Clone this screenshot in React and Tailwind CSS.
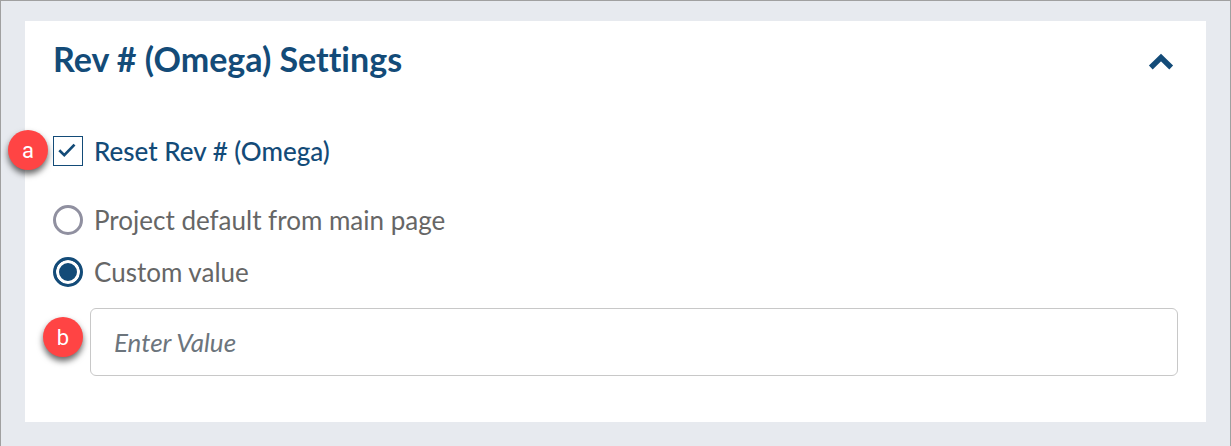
import React, { useState } from "react";

function Marker({ letter, className }) {
  return (
    <span
      className={`absolute flex h-10 w-10 items-center justify-center rounded-full bg-[#ff4444] pt-0.5 font-['Roboto',sans-serif] text-[22px] leading-6 text-white shadow-[0_4px_6px_rgba(0,0,0,0.6)] ${className}`}
    >
      {letter}
    </span>
  );
}

function RadioOption({ id, label, checked, onChange }) {
  return (
    <div className="flex h-8 items-center gap-[11px]">
      <input
        type="radio"
        name="revMode"
        id={id}
        checked={checked}
        onChange={onChange}
        className="h-[30px] w-[30px] shrink-0 appearance-none rounded-full border-3 border-[#9090a0] bg-white checked:border-[#134b78] checked:bg-[#134b78] checked:shadow-[inset_0_0_0_3px_white]"
      />
      <label htmlFor={id} className="text-[26px] leading-8 text-[#666666]">{label}</label>
    </div>
  );
}

function App() {
  const [open, setOpen] = useState(true);
  const [reset, setReset] = useState(true);
  const [mode, setMode] = useState("custom");
  const [value, setValue] = useState("");

  return (
    <div className="min-h-screen border border-[#a0a0a0] bg-[#e7eaef] px-6 pt-5 pb-6 font-['Lato',sans-serif] [font-variant-ligatures:none]">
      <section className="bg-white px-7 pt-[18px] pb-[46px]">
        <div className="flex h-11 items-center justify-between">
          <h2 className="pb-1 text-[34px] leading-10 font-bold text-[#134b78]">Rev # (Omega) Settings</h2>
          <button type="button" aria-label="Toggle settings" className="mr-1 p-0" onClick={() => setOpen(!open)}>
            <svg width="26" height="18" viewBox="0 0 26 18" fill="none" className={open ? "" : "rotate-180"}>
              <path d="M2.8 15.5L13 5.5L23.2 15.5" stroke="#134b78" strokeWidth="5.4" />
            </svg>
          </button>
        </div>

        {open && (
          <>
            <div className="relative mt-[52px] flex h-8 items-center gap-[11px]">
              <Marker letter="a" className="-left-[45px] -top-[5px]" />
              <div className="relative h-[30px] w-[30px] shrink-0">
                <input
                  type="checkbox"
                  id="resetRev"
                  checked={reset}
                  onChange={(e) => setReset(e.target.checked)}
                  className="block h-[30px] w-[30px] appearance-none border border-[#134b78] bg-white"
                />
                {reset && (
                  <svg className="pointer-events-none absolute inset-0" width="30" height="30" viewBox="0 0 30 30" fill="none">
                    <path d="M6.3 14.3L11.3 19.2L21.5 8.6" stroke="#134b78" strokeWidth="2.7" />
                  </svg>
                )}
              </div>
              <label htmlFor="resetRev" className="text-[26px] leading-8 font-medium text-[#134b78]">Reset Rev # (Omega)</label>
            </div>

            <div className="mt-[37px] space-y-5">
              <RadioOption
                id="projectDefault"
                label="Project default from main page"
                checked={mode === "default"}
                onChange={() => setMode("default")}
              />
              <RadioOption
                id="customValue"
                label="Custom value"
                checked={mode === "custom"}
                onChange={() => setMode("custom")}
              />
            </div>

            <div className="relative mt-5 ml-[37px]">
              <Marker letter="b" className="-left-[47px] top-[9px]" />
              <input
                type="text"
                aria-label="Custom value"
                placeholder="Enter Value"
                value={value}
                onChange={(e) => setValue(e.target.value)}
                className="block h-[68px] w-full rounded-md border border-[#c8c8c8] bg-white px-[23px] text-[26px] leading-8 text-[#666666] placeholder:text-[#6c757d] placeholder:italic"
              />
            </div>
          </>
        )}
      </section>
    </div>
  );
}

export default App;
